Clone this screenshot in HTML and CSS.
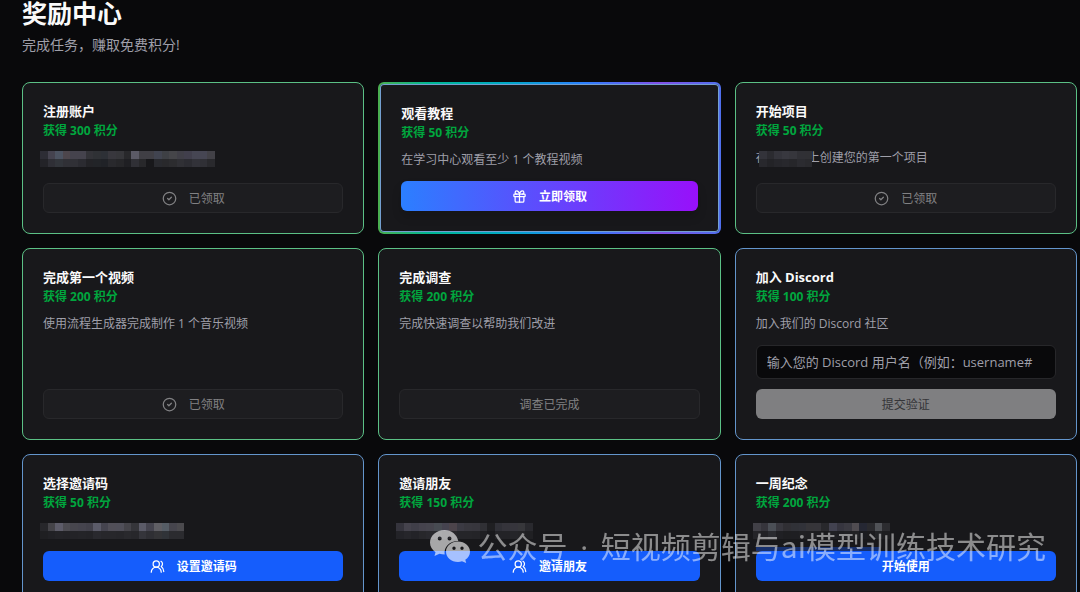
FILE: index.html
```html
<!DOCTYPE html>
<html lang="zh-CN">
<head>
    <meta charset="UTF-8">
    <meta name="viewport" content="width=device-width, initial-scale=1.0">
    <title>奖励中心</title>
    <link rel="stylesheet" href="styles.css">
</head>
<body>
    <!-- Shared icons -->
    <svg class="icon-defs" aria-hidden="true">
        <symbol id="icon-check" viewBox="0 0 24 24">
            <circle cx="12" cy="12" r="10"/>
            <path d="m9 12 2 2 4-4"/>
        </symbol>
        <symbol id="icon-gift" viewBox="0 0 24 24">
            <rect x="3" y="8" width="18" height="4" rx="1"/>
            <path d="M12 8v13"/>
            <path d="M19 12v7a2 2 0 0 1-2 2H7a2 2 0 0 1-2-2v-7"/>
            <path d="M7.5 8a2.5 2.5 0 0 1 0-5A4.8 8 0 0 1 12 8a4.8 8 0 0 1 4.5-5 2.5 2.5 0 0 1 0 5"/>
        </symbol>
        <symbol id="icon-users" viewBox="0 0 24 24">
            <path d="M18 21a8 8 0 0 0-16 0"/>
            <circle cx="10" cy="8" r="5"/>
            <path d="M22 20c0-3.37-2-6.5-4-8a5 5 0 0 0-.45-8.3"/>
        </symbol>
    </svg>

    <main class="page">
        <header class="page-header">
            <h1>奖励中心</h1>
            <p>完成任务，赚取免费积分!</p>
        </header>

        <section class="cards">
            <!-- Row 1 -->
            <article class="card done">
                <h2>注册账户</h2>
                <p class="points">获得 300 积分</p>
                <p class="desc"><svg class="mosaic" data-mosaic="register"></svg></p>
                <button class="btn btn-muted" disabled><svg class="icon"><use href="#icon-check"/></svg>已领取</button>
            </article>

            <article class="card claimable">
                <h2>观看教程</h2>
                <p class="points">获得 50 积分</p>
                <p class="desc">在学习中心观看至少 1 个教程视频</p>
                <button class="btn btn-claim"><svg class="icon"><use href="#icon-gift"/></svg>立即领取</button>
            </article>

            <article class="card done">
                <h2>开始项目</h2>
                <p class="points">获得 50 积分</p>
                <p class="desc">在<span class="redacted"><svg class="mosaic" data-mosaic="project"></svg></span>上创建您的第一个项目</p>
                <button class="btn btn-muted" disabled><svg class="icon"><use href="#icon-check"/></svg>已领取</button>
            </article>

            <!-- Row 2 -->
            <article class="card done">
                <h2>完成第一个视频</h2>
                <p class="points">获得 200 积分</p>
                <p class="desc">使用流程生成器完成制作 1 个音乐视频</p>
                <button class="btn btn-muted" disabled><svg class="icon"><use href="#icon-check"/></svg>已领取</button>
            </article>

            <article class="card done">
                <h2>完成调查</h2>
                <p class="points">获得 200 积分</p>
                <p class="desc">完成快速调查以帮助我们改进</p>
                <button class="btn btn-muted" disabled>调查已完成</button>
            </article>

            <article class="card">
                <h2>加入 Discord</h2>
                <p class="points">获得 100 积分</p>
                <p class="desc"><label for="discord-name">加入我们的 Discord 社区</label></p>
                <input class="text-input" id="discord-name" type="text" placeholder="输入您的 Discord 用户名（例如：username#">
                <button class="btn btn-submit" disabled>提交验证</button>
            </article>

            <!-- Row 3 -->
            <article class="card">
                <h2>选择邀请码</h2>
                <p class="points">获得 50 积分</p>
                <p class="desc"><svg class="mosaic" data-mosaic="code"></svg></p>
                <button class="btn btn-primary"><svg class="icon"><use href="#icon-users"/></svg>设置邀请码</button>
            </article>

            <article class="card">
                <h2>邀请朋友</h2>
                <p class="points">获得 150 积分</p>
                <p class="desc"><svg class="mosaic" data-mosaic="invite"></svg></p>
                <button class="btn btn-primary"><svg class="icon"><use href="#icon-users"/></svg>邀请朋友</button>
            </article>

            <article class="card">
                <h2>一周纪念</h2>
                <p class="points">获得 200 积分</p>
                <p class="desc"><svg class="mosaic" data-mosaic="week"></svg></p>
                <button class="btn btn-primary">开始使用</button>
            </article>
        </section>
    </main>

    <!-- Watermark -->
    <div class="watermark">
        <svg class="wechat" viewBox="0 0 40 33" aria-hidden="true">
            <path fill-rule="evenodd" d="M14.5 0C6.5 0 0 5.6 0 12.500c0 4 2.200 7.500 5.500 9.800L4.500 26l5-2.200c1.700.5 3.400.8 5.200.8-1.200-7.400 4.800-13.600 13.600-13.600C27 4.500 21.300 0 14.500 0zM9.700 6.500a2 2 0 1 1 0 4 2 2 0 0 1 0-4zM19.500 6.500a2 2 0 1 1 0 4 2 2 0 0 1 0-4z"/>
            <path fill-rule="evenodd" d="M28 11.500c-6.700 0-12 4.500-12 10.200s5.300 10.200 12 10.200c1.400 0 2.800-.2 4-.6l4.200 1.700-.9-3.300c2.900-1.900 4.700-4.700 4.700-8C40 16 34.700 11.500 28 11.500zM24 16.500a1.700 1.700 0 1 1 0 3.400 1.700 1.700 0 0 1 0-3.400zM32 16.500a1.700 1.700 0 1 1 0 3.400 1.700 1.700 0 0 1 0-3.400z"/>
        </svg>
        <span>公众号<span class="dot"> · </span>短视频剪辑与ai模型训练技术研究</span>
    </div>

    <script src="script.js"></script>
</body>
</html>
```

FILE: styles.css
```css
/* General */
* {
    box-sizing: border-box;
}

body {
    margin: 0;
    background: #09090b;
    color: #fafafa;
    font-family: "Open Sans", "Noto Sans CJK SC", sans-serif;
    font-size: 12px;
    line-height: 18px;
}

h1, h2, p {
    margin: 0;
}

button, input {
    font-family: inherit;
}

.icon-defs {
    display: none;
}

/* Page header */
.page {
    padding: 0 3px 14px 22px;
}

.page-header {
    margin-bottom: 27px;
}

.page-header h1 {
    margin-bottom: 9px;
    font-size: 25px;
    line-height: 26px;
}

.page-header p {
    color: #9f9fa9;
    font-size: 14px;
    line-height: 20px;
}

/* Cards */
.cards {
    display: grid;
    grid-template-columns: repeat(3, 1fr);
    gap: 14px;
}

.card {
    display: flex;
    flex-direction: column;
    padding: 20px;
    background: #18181b;
    border: 1px solid #6395cc;
    border-radius: 8px;
}

.card.done {
    border-color: #5bc085;
}

.card.claimable {
    padding: 21px;
    border: 2px solid transparent;
    border-radius: 6px;
    background:
        linear-gradient(#18181b, #18181b) padding-box,
        linear-gradient(90deg, #4caf50, #00b894 15%, #00a8c8 38%, #2b7fff 60%, #8250e8 82%, #4f6fee) border-box;
    box-shadow: inset 0 0 0 1px #739fd0;
}

.card h2 {
    margin-bottom: 3px;
    font-size: 13px;
    line-height: 16px;
}

.points {
    color: #00a63e;
    font-weight: bold;
}

.desc {
    height: 18px;
    margin: 9px 0 12px;
    color: #9f9fa9;
    white-space: nowrap;
}

/* Blurred-out text */
.mosaic {
    display: block;
    width: 176px;
    height: 18px;
    margin-left: -3px;
    overflow: visible;
}

.redacted {
    position: relative;
    display: inline-block;
    width: 40px;
}

.redacted .mosaic {
    position: absolute;
    left: -6px;
    bottom: -5px;
    width: 60px;
}

/* Buttons */
.btn {
    display: flex;
    align-items: center;
    justify-content: center;
    gap: 12px;
    height: 30px;
    margin-top: auto;
    padding: 1px 12px 0;
    border: none;
    border-radius: 6px;
    color: #ffffff;
    font-size: 12px;
    font-weight: bold;
    line-height: 18px;
}

.btn-muted {
    background: #1d1d20;
    border: 1px solid #28282b;
    color: #818183;
    font-weight: normal;
}

.btn-claim {
    background: linear-gradient(90deg, #2b7fff, #9810fa);
    box-shadow: 0 6px 10px rgba(0, 0, 0, 0.15);
}

.btn-primary {
    background: #155dfc;
}

.btn-submit {
    background: #7f7f81;
    color: #353538;
    font-weight: normal;
}

.icon {
    width: 15px;
    height: 15px;
    fill: none;
    stroke: currentColor;
    stroke-width: 2;
    stroke-linecap: round;
    stroke-linejoin: round;
}

/* Discord user name */
.text-input {
    width: 100%;
    height: 34px;
    margin-bottom: 10px;
    padding: 0 10px;
    background: #09090b;
    border: 1px solid #27272a;
    border-radius: 6px;
    color: #fafafa;
    font-size: 13px;
}

.text-input::placeholder {
    color: #9f9fa9;
    opacity: 1;
}

/* Watermark */
.watermark {
    position: fixed;
    right: 34px;
    bottom: 25px;
    display: flex;
    align-items: center;
    gap: 7px;
    color: rgba(255, 255, 255, 0.5);
    font-family: "Noto Sans CJK SC", sans-serif;
    font-size: 30px;
    font-weight: 400;
    line-height: 40px;
    white-space: nowrap;
    pointer-events: none;
}

.watermark .dot {
    padding: 0 5px;
    font-family: "Open Sans", sans-serif;
}

.wechat {
    width: 40px;
    height: 33px;
    fill: rgba(255, 255, 255, 0.62);
}
```

FILE: script.js
```js
// Pixel blocks that cover private text, one list of colours per row of blocks
const mosaics = {
    register: [
        ["#2d2d35", "#45434f", "#4c5361", "#4d464c", "#45434d", "#45434d", "#333338", "#2f3135", "#2d3036", "#38373d", "#36363a", "#28282b", "#5b5a66", "#403f45", "#403f45", "#414450", "#3e4045", "#454549", "#403f47", "#413f4c", "#464653", "#464653", "#424147"],
        ["#232328", "#2f2f36", "#32353b", "#303036", "#303036", "#2b2b31", "#232327", "#222428", "#202227", "#29292d", "#262629", "#1f1f23", "#303036", "#28282b", "#18181b", "#292a2f", "#29292c", "#2c2c2f", "#303035", "#2c2c32", "#323239", "#303036", "#29292d"]
    ],
    project: [
        ["#33333a", "#2b2b30", "#34343b", "#38383f", "#36363c", "#303035", "#303034"],
        ["#28282d", "#232327", "#26262b", "#28282d", "#26262a", "#2b2b30", "#29292d"]
    ],
    code: [
        ["#27272b", "#454449", "#5d5c69", "#4d4c52", "#47464e", "#45444e", "#42414b", "#5b5b69", "#45444f", "#514f58", "#504f59", "#45444a", "#35353a", "#5b5b68", "#45444f", "#605f65", "#565d66", "#46454d", "#4b4a4e"],
        ["#1f1f22", "#212125", "#232327", "#222226", "#232327", "#242428", "#232327", "#29292e", "#27272b", "#27272b", "#26262a", "#29292d", "#27272b", "#35353b", "#2f2f34", "#343437", "#303338", "#2b2b2f", "#2b2b2f"]
    ],
    invite: [
        ["#35343d", "#45434d", "#403f49", "#45434d", "#46454e", "#474b52", "#45434f", "#4c444b", "#3b3a43", "#38373e", "#37363d", "#303035", "#1f1f22", "#303037", "#35343b", "#36353c", "#37373b", "#29292e"],
        ["#232328", "#26262b", "#232328", "#27272b", "#29292e", "#28292e", "#232329", "#29272b", "#252529", "#252529", "#242428", "#1f1f22", "#19191c", "#232327", "#232327", "#252529", "#242427", "#202023"]
    ],
    week: [
        ["#414047", "#36353c", "#4b4f56", "#38373e", "#302f34", "#303137", "#313239", "#363539", "#36353a", "#28282c", "#424250", "#36353f", "#3b3a42", "#504c51", "#252733", "#2a2a2e", "#505257", "#2c2c30"],
        ["#242428", "#222226", "#2a2b30", "#202024", "#1e1e21", "#1e1e22", "#202023", "#1f1f22", "#1d1d20", "#1a1a1d", "#202024", "#1e1e22", "#202024", "#222225", "#1a1b20", "#1b1b1e", "#222326", "#1d1d20"]
    ]
};

const blockWidth = 7.6;
const blockHeight = 8;

function drawBlock(svg, x, y, width, height, color) {
    const rect = document.createElementNS("http://www.w3.org/2000/svg", "rect");
    rect.setAttribute("x", x);
    rect.setAttribute("y", y);
    rect.setAttribute("width", width);
    rect.setAttribute("height", height);
    rect.setAttribute("fill", color);
    rect.setAttribute("shape-rendering", "crispEdges");
    svg.appendChild(rect);
}

document.querySelectorAll("[data-mosaic]").forEach(svg => {
    mosaics[svg.dataset.mosaic].forEach((row, r) => {
        row.forEach((color, c) => {
            drawBlock(svg, c * blockWidth, 2 + r * blockHeight, blockWidth, blockHeight, color);
        });
    });

    // the weekly card has a dark blue edge above its button
    if (svg.dataset.mosaic === "week") {
        drawBlock(svg, 3, 26, 124, 4, "#17306c");
    }
});
```
